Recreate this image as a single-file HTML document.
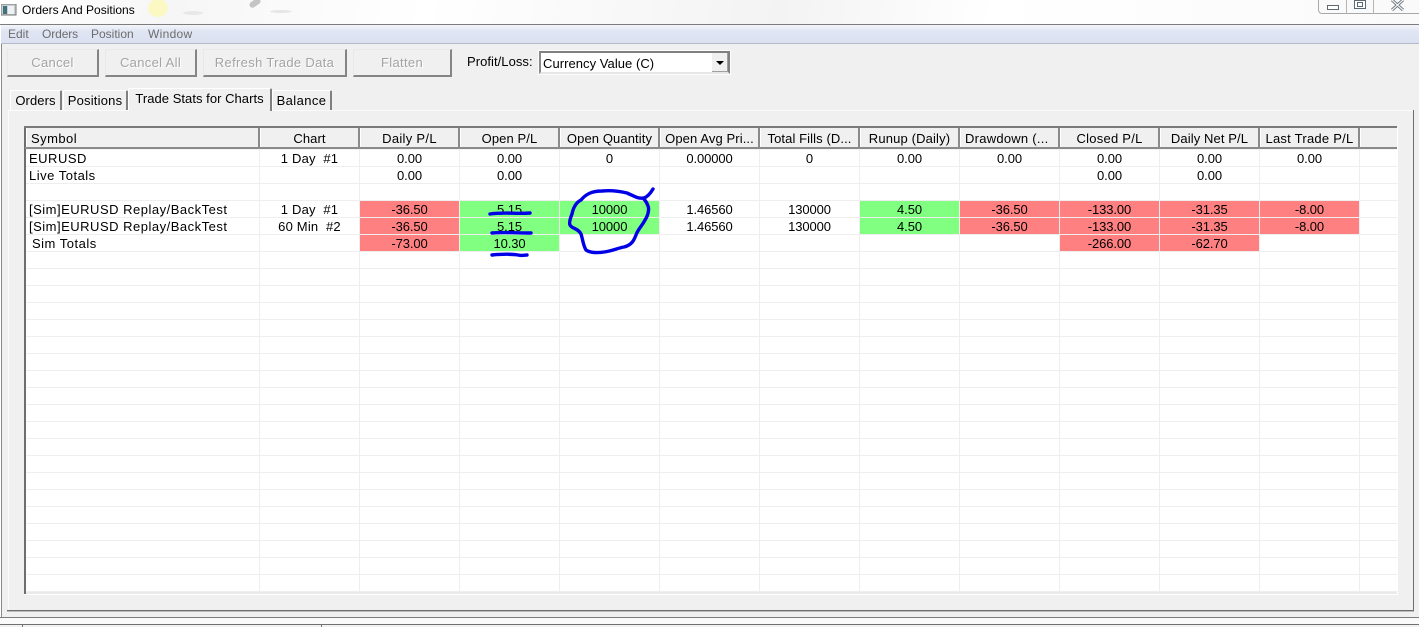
<!DOCTYPE html>
<html><head><meta charset="utf-8"><title>Orders And Positions</title>
<style>
html,body{margin:0;padding:0}
body{width:1419px;height:627px;overflow:hidden;position:relative;background:#fff;font-family:"Liberation Sans",sans-serif;font-size:13px;color:#000}
.a{position:absolute;white-space:nowrap}
.btn{position:absolute;top:49px;height:25px;box-sizing:content-box;background:#f0f0f0;border:1px solid #fff;border-right:2px solid #858585;border-bottom:2px solid #858585;border-top-color:#e8e8e8;border-left-color:#e8e8e8;color:#a3a3a3;text-align:center;line-height:25px;text-shadow:1px 1px 0 #fff;letter-spacing:.33px}
.tab{position:absolute;background:#f0f0f0;border:1px solid #fff;border-right:2px solid #808080;border-bottom:0;border-radius:2px 2px 0 0;text-align:center;box-sizing:border-box;letter-spacing:.1px}
.hd{position:absolute;top:128px;height:19px;line-height:22px;text-align:center;background:#f0f0f0;overflow:hidden;border-left:1px solid #fff;box-sizing:border-box;letter-spacing:.1px}
.sep{position:absolute;top:128px;width:2px;height:19px;background:#8a8a8a}
.row{position:absolute;left:0;width:1419px;height:16px;line-height:18px;letter-spacing:-.1px}
.row span{position:absolute;top:0;width:99px;height:16px;text-align:center;overflow:visible}
.r{background:#ff8080}.g{background:#80ff80}
.c1{left:260px}.c2{left:360px}.c3{left:460px}.c4{left:560px}.c5{left:660px}.c6{left:760px}.c7{left:860px}.c8{left:960px}.c9{left:1060px}.c10{left:1160px}.c11{left:1260px}
.row span.c1{letter-spacing:.2px}
.row span.s{left:29px;width:230px;text-align:left;letter-spacing:.5px}
</style></head><body>

<!-- title bar -->
<div class="a" style="left:0;top:0;width:1419px;height:24px;background:linear-gradient(100deg,#fff 0,#f6f6f6 12%,#fff 30%,#f3f3f3 55%,#ffffff 70%,#fafafa 100%)"></div>
<div class="a" style="left:148px;top:-1px;width:20px;height:18px;border-radius:50%;background:#fbf8c4"></div>
<div class="a" style="left:183px;top:11px;width:20px;height:4px;border-radius:50%;background:#e8e8e8"></div>
<div class="a" style="left:249px;top:0;width:12px;height:6px;border-radius:3px;background:#c4c4c4;transform:rotate(-35deg)"></div>
<div class="a" style="left:270px;top:10px;width:22px;height:3px;border-radius:50%;background:#e6e6e6"></div>
<svg class="a" style="left:1px;top:4px" width="16" height="12"><rect width="15" height="11" fill="#c9ced2" stroke="#777" stroke-width="1"/><rect x="2" y="2" width="4" height="8" fill="#41707e"/><rect x="7" y="2" width="6" height="8" fill="#eef2f4"/></svg>
<div class="a" style="left:22px;top:2px;font-size:12px;line-height:16px;color:#000">Orders And Positions</div>
<!-- window controls -->
<div class="a" style="left:1318px;top:-2px;width:101px;height:16px;box-sizing:border-box;border:1px solid #a8a8a8;border-top:0;border-right:0;border-radius:0 0 0 4px;background:#fafafa"></div>
<div class="a" style="left:1346px;top:0;width:1px;height:14px;background:#b4b4b4"></div>
<div class="a" style="left:1373px;top:0;width:1px;height:14px;background:#b4b4b4"></div>
<svg class="a" style="left:1320px;top:0" width="99" height="14">
<rect x="7.5" y="5.5" width="11" height="4" fill="#fff" stroke="#5c6a75"/>
<rect x="34.5" y="0.5" width="11" height="8" fill="#fff" stroke="#5c6a75"/><rect x="37.5" y="2.5" width="5" height="4" fill="none" stroke="#5c6a75"/>
<path d="M72 0L83 10M83 0L72 10" stroke="#6a747c" stroke-width="3" fill="none"/><path d="M72 0L83 10M83 0L72 10" stroke="#f4f4f4" stroke-width="1.2" fill="none"/>
</svg>

<!-- window body -->
<div class="a" style="left:0;top:24px;width:1419px;height:1px;background:#7d7d7d"></div>
<div class="a" style="left:0;top:25px;width:1px;height:592px;background:#fff"></div>
<div class="a" style="left:1px;top:25px;width:1418px;height:592px;background:#f0f0f0"></div>
<div class="a" style="left:1px;top:25px;width:1px;height:592px;background:#8a8a8a"></div>
<div class="a" style="left:1px;top:25px;width:1418px;height:18px;background:linear-gradient(#f3f5fa 0,#dfe5f3 35%,#dbe1f1 100%)"></div>
<div class="a" style="left:1px;top:43px;width:1418px;height:1px;background:#b5b9cc"></div>
<div class="a" style="left:8px;top:26px;line-height:17px;font-size:12px;color:#6d6d6d">Edit</div>
<div class="a" style="left:42px;top:26px;line-height:17px;font-size:12px;color:#6d6d6d;letter-spacing:-.1px">Orders</div>
<div class="a" style="left:91px;top:26px;line-height:17px;font-size:12px;color:#6d6d6d">Position</div>
<div class="a" style="left:148px;top:26px;line-height:17px;font-size:12px;color:#6d6d6d;letter-spacing:.3px">Window</div>

<!-- buttons -->
<div class="btn" style="left:7px;width:89px">Cancel</div>
<div class="btn" style="left:105px;width:89px">Cancel All</div>
<div class="btn" style="left:203px;width:141px">Refresh Trade Data</div>
<div class="btn" style="left:353px;width:96px">Flatten</div>

<!-- combo -->
<div class="a" style="left:467px;top:54px;line-height:16px;letter-spacing:.05px">Profit/Loss:</div>
<div class="a" style="left:539px;top:51px;width:191px;height:23px;box-sizing:border-box;background:#fff;border:2px solid #808080;border-bottom-color:#e6e6e6;border-left-color:#8a8a8a;outline:1px solid #fcfcfc"></div>
<div class="a" style="left:543px;top:56px;line-height:16px;font-size:13px;letter-spacing:.05px">Currency Value (C)</div>
<div class="a" style="left:712px;top:53px;width:16px;height:19px;background:#f0f0f0;border-right:1px solid #a0a0a0;border-bottom:1px solid #a0a0a0;box-sizing:border-box"></div>
<svg class="a" style="left:716px;top:61px" width="9" height="5"><path d="M0 0H8L4 4Z" fill="#000"/></svg>

<!-- tab panel -->
<div class="a" style="left:8px;top:110px;width:1405px;height:500px;background:#f0f0f0;border-top:1px solid #fbfbfb;border-left:1px solid #fbfbfb;box-sizing:content-box"></div>
<div class="a" style="left:1413px;top:110px;width:1px;height:501px;background:#6e6e6e"></div>
<div class="a" style="left:7px;top:610px;width:1407px;height:1px;background:#6e6e6e"></div>
<div class="a" style="left:7px;top:611px;width:1407px;height:1px;background:#bdbdbd"></div>
<div class="a" style="left:0;top:617px;width:1419px;height:1px;background:#7d7d7d"></div>
<div class="a" style="left:0;top:618px;width:1419px;height:6px;background:#fafafa"></div>
<div class="a" style="left:0;top:624px;width:1419px;height:1px;background:#707070"></div>
<div class="a" style="left:0;top:625px;width:1419px;height:2px;background:#f2f2f2"></div>
<div class="a" style="left:22px;top:625px;width:1px;height:2px;background:#707070"></div>
<div class="a" style="left:321px;top:625px;width:1px;height:2px;background:#707070"></div>

<!-- tabs -->
<div class="tab" style="left:10px;top:90px;width:52px;height:20px;line-height:20px">Orders</div>
<div class="tab" style="left:63px;top:90px;width:65px;height:20px;line-height:20px;letter-spacing:.2px">Positions</div>
<div class="tab" style="left:128px;top:88px;width:144px;height:23px;line-height:20px;z-index:2;letter-spacing:.04px">Trade Stats for Charts</div>
<div class="tab" style="left:272px;top:90px;width:60px;height:20px;line-height:20px;letter-spacing:.4px">Balance</div>

<!-- grid -->
<div class="a" style="left:24px;top:127px;width:2px;height:467px;background:#6e6e6e"></div>
<div class="a" style="left:24px;top:126px;width:1373px;height:2px;background:#7a7a7a"></div>
<div class="a" style="left:25px;top:147px;width:1372px;height:2px;background:#8a8a8a"></div>
<div class="a" style="left:26px;top:149px;width:1371px;height:444px;background-color:#fff;background-image:linear-gradient(#eeeeee 1px,transparent 1px);background-size:100% 17px;background-position:0 0"></div>
<div class="a" style="left:259px;top:149px;width:1138px;height:444px;background-image:linear-gradient(90deg,#eeeeee 1px,transparent 1px);background-size:100px 100%;background-position:0 0"></div>
<div class="a" style="left:26px;top:149px;width:1371px;height:1px;background:#f4f4f4"></div>
<div class="a" style="left:26px;top:592px;width:1371px;height:2px;background:#eaeaea"></div>
<div class="a" style="left:1397px;top:128px;width:1px;height:467px;background:#fff"></div>
<div class="a" style="left:24px;top:594px;width:1374px;height:1px;background:#fff"></div>

<!-- header -->
<div class="hd" style="left:26px;width:232px;text-align:left;padding-left:4px;letter-spacing:.45px">Symbol</div>
<div class="hd" style="left:260px;width:98px">Chart</div>
<div class="hd" style="left:360px;width:98px;letter-spacing:.3px">Daily P/L</div>
<div class="hd" style="left:460px;width:98px">Open P/L</div>
<div class="hd" style="left:560px;width:98px">Open Quantity</div>
<div class="hd" style="left:660px;width:98px">Open Avg Pri...</div>
<div class="hd" style="left:760px;width:98px">Total Fills (D...</div>
<div class="hd" style="left:860px;width:98px;letter-spacing:.15px">Runup (Daily)</div>
<div class="hd" style="left:960px;width:98px;text-align:left;padding-left:4px;letter-spacing:.25px">Drawdown (...</div>
<div class="hd" style="left:1060px;width:98px;letter-spacing:.25px">Closed P/L</div>
<div class="hd" style="left:1160px;width:98px;letter-spacing:.1px">Daily Net P/L</div>
<div class="hd" style="left:1260px;width:98px;letter-spacing:.25px">Last Trade P/L</div>
<div class="hd" style="left:1360px;width:37px"></div>
<div class="sep" style="left:258px"></div><div class="sep" style="left:358px"></div><div class="sep" style="left:458px"></div><div class="sep" style="left:558px"></div><div class="sep" style="left:658px"></div><div class="sep" style="left:758px"></div><div class="sep" style="left:858px"></div><div class="sep" style="left:958px"></div><div class="sep" style="left:1058px"></div><div class="sep" style="left:1158px"></div><div class="sep" style="left:1258px"></div><div class="sep" style="left:1358px"></div>

<!-- rows -->
<div class="row" style="top:150px"><span class="s">EURUSD</span><span class="c1">1 Day&nbsp; #1</span><span class="c2">0.00</span><span class="c3">0.00</span><span class="c4">0</span><span class="c5">0.00000</span><span class="c6">0</span><span class="c7">0.00</span><span class="c8">0.00</span><span class="c9">0.00</span><span class="c10">0.00</span><span class="c11">0.00</span></div>
<div class="row" style="top:167px"><span class="s">Live Totals</span><span class="c2">0.00</span><span class="c3">0.00</span><span class="c9">0.00</span><span class="c10">0.00</span></div>
<div class="row" style="top:201px"><span class="s">[Sim]EURUSD Replay/BackTest</span><span class="c1">1 Day&nbsp; #1</span><span class="c2 r">-36.50</span><span class="c3 g">5.15</span><span class="c4 g">10000</span><span class="c5">1.46560</span><span class="c6">130000</span><span class="c7 g">4.50</span><span class="c8 r">-36.50</span><span class="c9 r">-133.00</span><span class="c10 r">-31.35</span><span class="c11 r">-8.00</span></div>
<div class="row" style="top:218px"><span class="s">[Sim]EURUSD Replay/BackTest</span><span class="c1">60 Min&nbsp; #2</span><span class="c2 r">-36.50</span><span class="c3 g">5.15</span><span class="c4 g">10000</span><span class="c5">1.46560</span><span class="c6">130000</span><span class="c7 g">4.50</span><span class="c8 r">-36.50</span><span class="c9 r">-133.00</span><span class="c10 r">-31.35</span><span class="c11 r">-8.00</span></div>
<div class="row" style="top:235px"><span class="s" style="left:32px">Sim Totals</span><span class="c2 r">-73.00</span><span class="c3 g">10.30</span><span class="c9 r">-266.00</span><span class="c10 r">-62.70</span></div>

<!-- ink annotations -->
<svg class="a" style="left:0;top:0;pointer-events:none" width="1419" height="627" fill="none" stroke="#0000e6" stroke-width="3.4" stroke-linecap="round" stroke-linejoin="round">
<path d="M490 214C503 212 517 214 530 213"/>
<path d="M492 233C505 232 518 233 531 233"/>
<path d="M492 255C503 254 512 254 518 255C522 256 525 255 527 255"/>
<path d="M653 189C650 194 647 197 644 198C638 199 634 196 627 193C619 191 612 190 602 191C592 191 586 194 581 200C575 203 573 209 572 214C570 219 569 223 570 225C572 229 578 228 581 234C583 240 583 245 586 250C590 253 598 253 604 252C612 251 618 248 624 247C632 245 634 240 636 235C638 229 642 226 645 220C649 214 649 208 648 206C647 203 645 200 643 198"/>
</svg>
</body></html>
